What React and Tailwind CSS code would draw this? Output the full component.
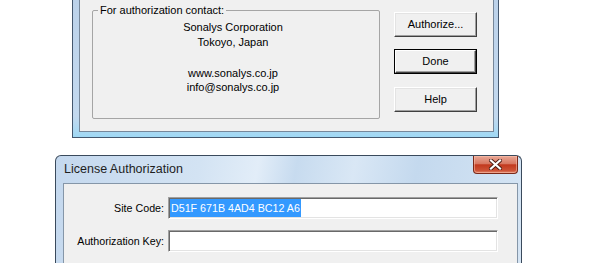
export default function App() {
  const btn =
    "w-[83px] h-[25px] flex items-center justify-center bg-[#f0f0f0] border border-t-white border-l-white border-r-[#404040] border-b-[#404040] shadow-[inset_-1px_-1px_0_#a0a0a0,inset_1px_1px_0_#e3e3e3]";
  const input =
    "w-[330px] h-[22px] bg-white border border-t-[#a0a0a0] border-l-[#a0a0a0] border-r-white border-b-white shadow-[inset_1px_1px_0_#696969,inset_-1px_-1px_0_#e3e3e3] flex items-center pl-[1px]";
  return (
    <div className="w-[603px] h-[263px] bg-white overflow-hidden font-['Liberation_Sans',Arial,sans-serif] text-[11px] text-black flex flex-col">
      {/* Top dialog (cut off at top) */}
      <div className="ml-[72px] w-[427px] h-[138px] shrink-0 flex flex-col border-l border-r border-b border-[#44576e] bg-[linear-gradient(to_bottom,#bcd2ea,#c3d9ef_85%,#9fd8f4)] pl-[6px] pr-[4px] pb-[5px]">
        <div className="flex-1 flex border-l border-r border-b border-[#76879a] bg-[#f0f0f0]">
          <fieldset className="ml-[12px] mt-[4px] w-[288px] h-[115px] border border-[#a5a5a5] rounded-[2px] pr-[6px]">
            <legend className="ml-[5px] px-[2px] leading-[12px]">For authorization contact:</legend>
            <div className="pt-[4px] text-center leading-[15px]">
              <div>Sonalys Corporation</div>
              <div>Tokoyo, Japan</div>
            </div>
            <div className="mt-[16px] text-center leading-[14px]">
              <div>www.sonalys.co.jp</div>
              <div>info@sonalys.co.jp</div>
            </div>
          </fieldset>
          <div className="ml-[14px] flex flex-col">
            <div className={btn + " mt-[12px]"}>Authorize...</div>
            <div className="mt-[12px] w-[83px] h-[25px] border border-black">
              <div className="w-full h-full flex items-center justify-center bg-[#f0f0f0] border border-t-white border-l-white border-r-[#404040] border-b-[#404040] shadow-[inset_-1px_-1px_0_#a0a0a0]">
                Done
              </div>
            </div>
            <div className={btn + " mt-[13px]"}>Help</div>
          </div>
        </div>
      </div>

      {/* License Authorization dialog */}
      <div className="mt-[17px] ml-[55px] w-[467px] h-[112px] shrink-0 flex flex-col border-l border-r border-t border-[#3a4a5c] rounded-t-[6px] bg-[linear-gradient(100deg,#c4d8ee_0%,#d3e3f3_30%,#e2edf8_42%,#c7dbef_50%,#d9e7f5_62%,#c4d9ee_75%,#d6e5f4_100%)]">
        <div className="h-[27px] shrink-0 flex items-start">
          <div className="self-center pl-[8px] text-[12.5px] text-[#1e1e1e]">
            License Authorization
          </div>
          <div className="ml-auto mr-[3px] w-[45px] h-[18px] flex items-center justify-center border border-t-0 border-[#7a2818] rounded-b-[4px] bg-[linear-gradient(to_bottom,#e9a795,#d87862_45%,#c2391e_52%,#cd5236_85%,#e0866c)] shadow-[inset_0_0_0_1px_rgba(255,200,180,0.5)]">
            <svg width="15" height="11" viewBox="0 0 15 11">
              <path d="M3 1.5 L12 9.5 M12 1.5 L3 9.5" stroke="#4a1a10" strokeWidth="4" strokeLinecap="round" fill="none" />
              <path d="M3 1.5 L12 9.5 M12 1.5 L3 9.5" stroke="#ffffff" strokeWidth="2.2" strokeLinecap="square" fill="none" />
            </svg>
          </div>
        </div>
        <div className="flex-1 ml-[7px] mr-[3px] border border-[#8596a8] bg-[#f0f0f0] flex flex-col pt-[13px]">
          <div className="flex items-center gap-[4px]">
            <div className="w-[100px] text-right text-[10.7px]">Site Code:</div>
            <div className={input}>
              <span className="bg-[#3399ff] text-white leading-[18px] px-[1px] text-[10.7px]">D51F 671B 4AD4 BC12 A6</span>
            </div>
          </div>
          <div className="flex items-center gap-[4px] mt-[11px]">
            <div className="w-[100px] text-right text-[10.7px]">Authorization Key:</div>
            <div className={input}></div>
          </div>
        </div>
      </div>
    </div>
  );
}
